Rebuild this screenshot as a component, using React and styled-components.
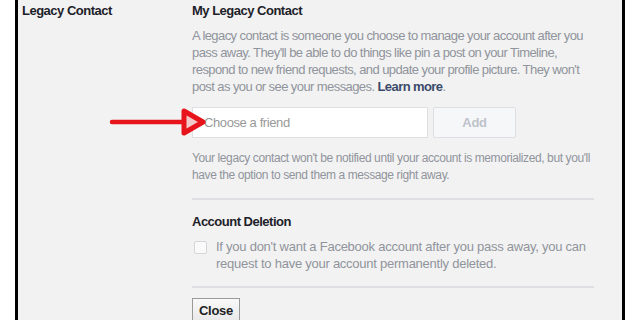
import React from 'react';
import styled, { createGlobalStyle } from 'styled-components';

const Global = createGlobalStyle`
  html, body { margin: 0; padding: 0; background: #fff; }
  body { font-family: "Liberation Sans", Arial, sans-serif; }
  * { box-sizing: border-box; }
`;

const Panel = styled.div`
  position: relative;
  margin-left: 15px;
  width: 610px;
  height: 320px;
  overflow: hidden;
  background: #f2f2f2;
  border-left: 3px solid #000;
  border-right: 3px solid #000;
  display: grid;
  grid-template-columns: 170px 402px;
  align-items: start;
  padding: 3px 0 0 4px;
`;

const Label = styled.div`
  font-size: 13px;
  line-height: 16px;
  font-weight: bold;
  letter-spacing: -0.5px;
  color: #1d2129;
`;

const Content = styled.div`
  display: flex;
  flex-direction: column;
`;

const Heading = styled.div`
  font-size: 13px;
  line-height: 16px;
  font-weight: bold;
  letter-spacing: -0.5px;
  color: #1d2129;
  margin-top: ${p => p.$top || 0}px;
`;

const Text = styled.p`
  margin: ${p => p.$top || 0}px 0 0;
  font-size: ${p => p.$size || 13}px;
  line-height: 17px;
  letter-spacing: ${p => p.$track ?? -0.4}px;
  color: #90949c;
`;

const LearnMore = styled.a`
  color: #3b4a6b;
  font-weight: bold;
  text-decoration: none;
`;

const Row = styled.div`
  display: flex;
  gap: 5px;
  margin-top: 12px;
`;

const Input = styled.input`
  width: 236px;
  height: 31px;
  border: 1px solid #dddfe2;
  background: #fff;
  padding: 0 11px;
  font-family: inherit;
  font-size: 13px;
  letter-spacing: -0.4px;
  color: #1d2129;
  outline: none;
  &::placeholder { color: #999; }
`;

const AddButton = styled.button`
  width: 83px;
  height: 31px;
  border: 1px solid #dddfe2;
  border-radius: 2px;
  background: #f6f7f9;
  color: #bec2c9;
  font-family: inherit;
  font-weight: bold;
  font-size: 13px;
  letter-spacing: -0.3px;
`;

const Divider = styled.hr`
  margin: ${p => p.$top || 0}px 0 0;
  border: 0;
  border-top: 2px solid #dddfe2;
  width: 402px;
`;

const CheckRow = styled.label`
  display: flex;
  align-items: flex-start;
  gap: 9px;
  margin-top: 8px;
  padding-left: 2px;
`;

const Box = styled.span`
  flex: none;
  width: 13px;
  height: 13px;
  margin-top: 3px;
  border: 1px solid #d4d6da;
  border-radius: 2px;
  background: #fafafa;
`;

const CloseButton = styled.button`
  align-self: flex-start;
  margin-top: 10px;
  height: 24px;
  padding: 0 6px;
  border: 1px solid #999;
  border-bottom-color: #888;
  background: linear-gradient(#f9f9f9, #e9e9e9);
  font-family: inherit;
  font-weight: bold;
  font-size: 13px;
  letter-spacing: -0.3px;
  color: #222;
`;

const Arrow = styled.svg`
  position: absolute;
  left: 0;
  top: 0;
  pointer-events: none;
`;

export default function App() {
  return (
    <>
      <Global />
      <Panel>
        <Label>Legacy Contact</Label>
        <Content>
          <Heading>My Legacy Contact</Heading>
          <Text $top={8} $track={-0.58}>
            A legacy contact is someone you choose to manage your account after you pass away.
            They'll be able to do things like pin a post on your Timeline, respond to new friend
            requests, and update your profile picture. They won't post as you or see your
            messages. <LearnMore href="#">Learn more</LearnMore>.
          </Text>
          <Row>
            <Input placeholder="Choose a friend" />
            <AddButton>Add</AddButton>
          </Row>
          <Text $top={12} $size={12}>
            Your legacy contact won't be notified until your account is memorialized, but you'll
            have the option to send them a message right away.
          </Text>
          <Divider $top={14} />
          <Heading $top={14}>Account Deletion</Heading>
          <CheckRow>
            <Box />
            <Text $track={-0.25}>
              If you don't want a Facebook account after you pass away, you can request to have
              your account permanently deleted.
            </Text>
          </CheckRow>
          <Divider $top={14} />
          <CloseButton>Close</CloseButton>
        </Content>
        <Arrow width="220" height="160" viewBox="0 0 220 160">
          <line x1="94" y1="122" x2="170" y2="122" stroke="#e8141b" strokeWidth="4.5" strokeLinecap="round" />
          <polygon points="166,111 166,133 185,122" fill="#f2c8c8" stroke="#e8141b" strokeWidth="5" strokeLinejoin="round" />
        </Arrow>
      </Panel>
    </>
  );
}
